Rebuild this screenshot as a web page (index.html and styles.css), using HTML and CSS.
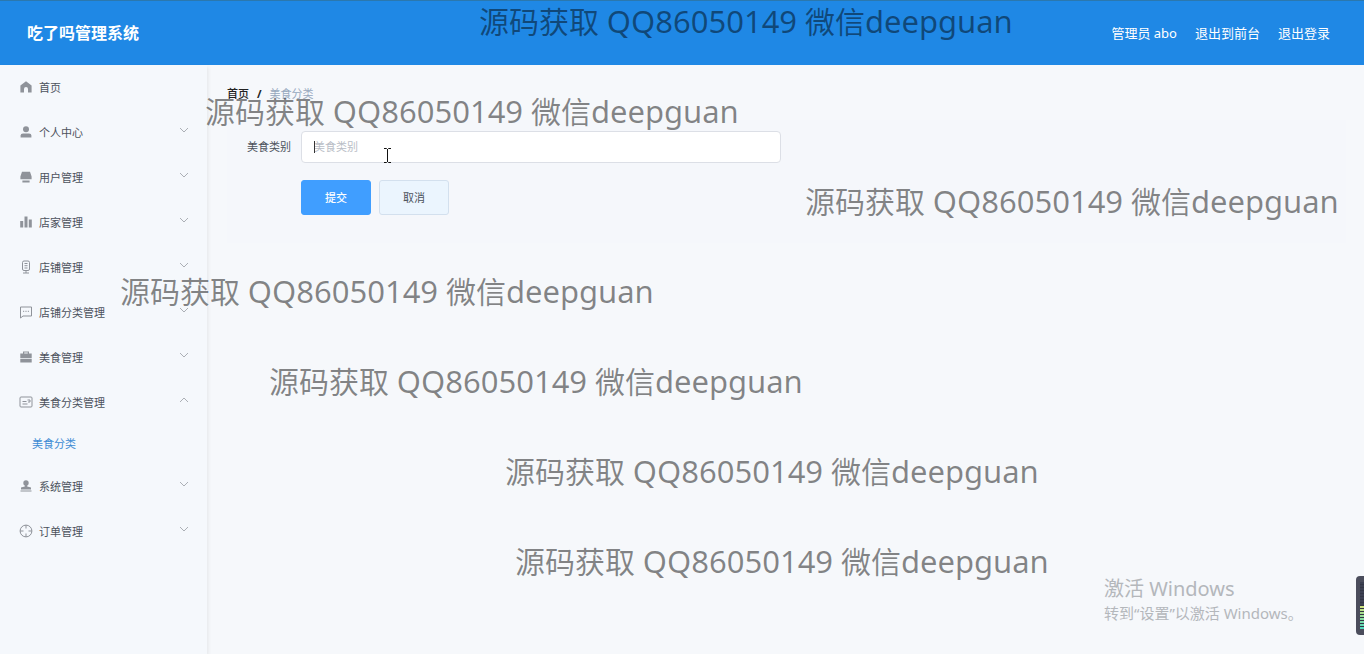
FILE: index.html
```
<!DOCTYPE html>
<html lang="zh-CN">
<head>
    <meta charset="UTF-8">
    <meta name="viewport" content="width=device-width, initial-scale=1.0">
    <title>吃了吗管理系统</title>
    <link rel="stylesheet" href="styles.css">
</head>
<body>
    <header class="navbar">
        <h1 class="title">吃了吗管理系统</h1>
        <div class="user-info">
            <span>管理员 abo</span>
            <a href="#">退出到前台</a>
            <a href="#">退出登录</a>
        </div>
    </header>

    <div class="container">
        <nav class="sidebar">
            <ul class="menu">
                <li>
                    <a class="menu-item" href="#">
                        <svg class="icon" viewBox="0 0 14 14"><path fill="currentColor" d="M7 1.200 1.400 5.600V12.600H5V9a2 2 0 0 1 4 0v3.600h3.600V5.600z"/></svg>
                        <span>首页</span>
                    </a>
                </li>
                <li>
                    <button class="menu-item" type="button">
                        <svg class="icon" viewBox="0 0 14 14"><circle cx="7" cy="4.200" r="3" fill="currentColor"/><path fill="currentColor" d="M1.600 12.600V10.600Q1.600 8.400 4 8.400h6q2.400 0 2.400 2.200v2z"/></svg>
                        <span>个人中心</span>
                        <svg class="arrow" viewBox="0 0 10 10"><path d="M1 3l4 4 4-4"/></svg>
                    </button>
                </li>
                <li>
                    <button class="menu-item" type="button">
                        <svg class="icon" viewBox="0 0 14 14"><path fill="currentColor" d="M3 1.800h8l1.600 4.800v2.700H1.400V6.600zM3.400 10.400h7.200v2H3.400z"/></svg>
                        <span>用户管理</span>
                        <svg class="arrow" viewBox="0 0 10 10"><path d="M1 3l4 4 4-4"/></svg>
                    </button>
                </li>
                <li>
                    <button class="menu-item" type="button">
                        <svg class="icon" viewBox="0 0 14 14"><path fill="currentColor" d="M1.200 6h3v6.500h-3zM5.500 1.500h3v11h-3zM9.800 4.500h3v8h-3z"/></svg>
                        <span>店家管理</span>
                        <svg class="arrow" viewBox="0 0 10 10"><path d="M1 3l4 4 4-4"/></svg>
                    </button>
                </li>
                <li>
                    <button class="menu-item" type="button">
                        <svg class="icon line" viewBox="0 0 14 14"><rect x="3.500" y="1" width="7" height="9.500" rx="1.500"/><path d="M7 10.500v2.500M4 13h6M5.500 3.500h3M5.500 5.700h3M5.500 8h3"/></svg>
                        <span>店铺管理</span>
                        <svg class="arrow" viewBox="0 0 10 10"><path d="M1 3l4 4 4-4"/></svg>
                    </button>
                </li>
                <li>
                    <button class="menu-item" type="button">
                        <svg class="icon line" viewBox="0 0 14 14"><path d="M1.500 2h11v9H4l-2.500 2z"/><path d="M4 6.300h1.200M6.400 6.300h1.200M8.800 6.300H10"/></svg>
                        <span>店铺分类管理</span>
                        <svg class="arrow" viewBox="0 0 10 10"><path d="M1 3l4 4 4-4"/></svg>
                    </button>
                </li>
                <li>
                    <button class="menu-item" type="button">
                        <svg class="icon" viewBox="0 0 14 14"><path fill="currentColor" d="M4 3.500V1.500h6v2h2.700v4.700H1.300V3.500zM5.200 3.500h3.600V2.600H5.200zM1.300 9h11.400v3.500H1.300z"/></svg>
                        <span>美食管理</span>
                        <svg class="arrow" viewBox="0 0 10 10"><path d="M1 3l4 4 4-4"/></svg>
                    </button>
                </li>
                <li>
                    <button class="menu-item" type="button">
                        <svg class="icon line" viewBox="0 0 14 14"><rect x="1" y="2" width="12" height="10" rx="1"/><path d="M3.500 6.500h4M3.500 9h5M8.500 5h2.500v2H9"/></svg>
                        <span>美食分类管理</span>
                        <svg class="arrow" viewBox="0 0 10 10"><path d="M1 7l4-4 4 4"/></svg>
                    </button>
                    <a class="submenu-item" href="#">美食分类</a>
                </li>
                <li>
                    <button class="menu-item" type="button">
                        <svg class="icon" viewBox="0 0 14 14"><circle cx="7" cy="4" r="2.700" fill="currentColor"/><path fill="currentColor" d="M5.800 5h2.400v2.500l3.800 1V10.400H2V8.500l3.800-1zM1.500 11.400h11v1.200h-11z"/></svg>
                        <span>系统管理</span>
                        <svg class="arrow" viewBox="0 0 10 10"><path d="M1 3l4 4 4-4"/></svg>
                    </button>
                </li>
                <li>
                    <button class="menu-item" type="button">
                        <svg class="icon line" viewBox="0 0 14 14"><circle cx="7" cy="7" r="5.900"/><path d="M7 1v3.500M7 9.500V13M1 7h3.500M9.500 7H13"/></svg>
                        <span>订单管理</span>
                        <svg class="arrow" viewBox="0 0 10 10"><path d="M1 3l4 4 4-4"/></svg>
                    </button>
                </li>
            </ul>
        </nav>

        <main class="content">
            <div class="breadcrumb">
                <a href="#">首页</a>
                <span class="separator">/</span>
                <span class="current">美食分类</span>
            </div>
            <form class="edit-form">
                <div class="form-group">
                    <label for="category">美食类别</label>
                    <div class="input-box">
                        <input type="text" id="category" name="category" placeholder="美食类别">
                        <span class="caret"></span>
                        <svg class="pointer" viewBox="0 0 9 17"><path d="M1 1.500h2.500l1 1 1-1H8M4.500 2v13M1 15.500h2.500l1-1 1 1H8"/></svg>
                    </div>
                </div>
                <div class="buttons">
                    <button class="btn btn-primary" type="submit">提交</button>
                    <button class="btn btn-cancel" type="button">取消</button>
                </div>
            </form>
        </main>
    </div>

    <div class="watermarks">
        <div class="mark mark-1">源码获取 <span>QQ86050149</span> 微信<span>deepguan</span></div>
        <div class="mark mark-2">源码获取 <span>QQ86050149</span> 微信<span>deepguan</span></div>
        <div class="mark mark-3">源码获取 <span>QQ86050149</span> 微信<span>deepguan</span></div>
        <div class="mark mark-4">源码获取 <span>QQ86050149</span> 微信<span>deepguan</span></div>
        <div class="mark mark-5">源码获取 <span>QQ86050149</span> 微信<span>deepguan</span></div>
        <div class="mark mark-6">源码获取 <span>QQ86050149</span> 微信<span>deepguan</span></div>
        <div class="mark mark-7">源码获取 <span>QQ86050149</span> 微信<span>deepguan</span></div>
    </div>

    <div class="activate">
        <p class="activate-title">激活 Windows</p>
        <p class="activate-text">转到“设置”以激活 Windows。</p>
    </div>
    <div class="meter"><div class="meter-bars"></div></div>
</body>
</html>
```

FILE: styles.css
```
* {
    box-sizing: border-box;
}
body {
    margin: 0;
    min-height: 100vh;
    display: flex;
    flex-direction: column;
    font-family: "Noto Sans", "Noto Sans CJK SC", sans-serif;
    font-size: 11px;
    color: #4c525c;
    background-color: #f6f8fb;
}
a {
    color: inherit;
    text-decoration: none;
}
button {
    font: inherit;
    cursor: pointer;
}

/* header */
.navbar {
    display: flex;
    justify-content: space-between;
    align-items: center;
    height: 65px;
    padding: 0 34px 2px 27px;
    border-top: 1px solid #2b78ae;
    background-color: #1f88e5;
    color: #fff;
}
.title {
    margin: 0;
    font-size: 16px;
    font-weight: bold;
}
.user-info {
    display: flex;
    gap: 18px;
    font-size: 13px;
}

.container {
    display: flex;
    flex: 1;
}

/* sidebar */
.sidebar {
    width: 207px;
    flex-shrink: 0;
    background-color: #f5f8fc;
    box-shadow: 1px 2px 4px rgba(0, 0, 0, 0.08);
}
.menu {
    margin: 0;
    padding: 0;
    list-style: none;
}
.menu-item {
    display: flex;
    align-items: center;
    gap: 6px;
    width: 100%;
    height: 45px;
    padding: 0 18px 2px 19px;
    border: none;
    background: none;
    color: #4c525c;
}
.icon {
    width: 14px;
    height: 14px;
    color: #8f939a;
}
.line {
    fill: none;
    stroke: currentColor;
    stroke-width: 1;
}
.arrow {
    width: 10px;
    height: 10px;
    margin-left: auto;
    margin-bottom: 3px;
    fill: none;
    stroke: #abafb5;
    stroke-width: 1;
}
.submenu-item {
    display: flex;
    align-items: center;
    height: 39px;
    padding: 0 0 4px 32px;
    color: #3d8bd4;
}

/* content */
.content {
    flex: 1;
    padding: 20px 18px 20px 20px;
}
.breadcrumb {
    display: flex;
    align-items: center;
    gap: 8px;
    height: 16px;
    color: #222;
    font-weight: 500;
}
.separator {
    font-weight: bold;
}
.current {
    color: #97a8be;
    font-weight: normal;
}
.edit-form {
    margin-top: 19px;
    padding: 11px 20px 28px;
    background-color: #f5f7fb;
}
.form-group {
    display: flex;
    align-items: center;
    margin-bottom: 17px;
}
.form-group label {
    width: 54px;
    padding-bottom: 2px;
}
.input-box {
    position: relative;
    flex: 0 1 480px;
}
.input-box input {
    display: block;
    width: 100%;
    height: 32px;
    padding: 0 12px 2px;
    border: 1px solid #dcdfe6;
    border-radius: 4px;
    background-color: #fff;
    font: inherit;
}
.input-box input::placeholder {
    color: #b9bdc6;
}
.caret {
    position: absolute;
    left: 13px;
    top: 10px;
    width: 1px;
    height: 12px;
    background-color: #333;
}
.pointer {
    position: absolute;
    left: 82px;
    top: 16px;
    width: 9px;
    height: 17px;
    fill: none;
    stroke: #111;
    stroke-width: 1;
}
.buttons {
    display: flex;
    gap: 8px;
    padding-left: 54px;
}
.btn {
    min-width: 70px;
    height: 35px;
    padding: 0 6px 2px;
    border: 1px solid #409eff;
    border-radius: 3px;
}
.btn-primary {
    background-color: #409eff;
    color: #fff;
    font-weight: 500;
}
.btn-cancel {
    border-color: #d3e0ee;
    background-color: #ebf5fe;
    color: #4c525c;
}

/* watermarks lie over the whole page */
.watermarks {
    position: absolute;
    inset: 0;
    overflow: hidden;
    pointer-events: none;
}
.mark {
    position: absolute;
    font-size: 30px;
    line-height: 40px;
    white-space: nowrap;
    color: rgba(0, 0, 0, 0.47);
}
.mark span {
    font-size: 31px;
}
.mark-1 {
    left: 479px;
    top: 1px;
}
.mark-2 {
    left: 205px;
    top: 91px;
}
.mark-3 {
    left: 805px;
    top: 181px;
}
.mark-4 {
    left: 120px;
    top: 271px;
}
.mark-5 {
    left: 269px;
    top: 361px;
}
.mark-6 {
    left: 505px;
    top: 451px;
}
.mark-7 {
    left: 515px;
    top: 541px;
}

.activate {
    position: absolute;
    right: 60px;
    bottom: 30px;
    width: 200px;
    color: #b4b7bb;
    white-space: nowrap;
}
.activate p {
    margin: 0;
}
.activate-title {
    font-size: 20px;
    line-height: 26px;
}
.activate-text {
    font-size: 15px;
    line-height: 22px;
}

/* level meter on the screen edge */
.meter {
    position: absolute;
    right: 0;
    bottom: 19px;
    width: 8px;
    height: 59px;
    padding: 6px 0 6px 4px;
    border-radius: 4px 0 0 4px;
    background-color: #4b4d5c;
}
.meter-bars {
    height: 100%;
    background:
        repeating-linear-gradient(transparent 0 2px, #333645 2px 3px),
        linear-gradient(#3c4052 50%, #d3e27a 50%, #4fd8c0);
}
```
